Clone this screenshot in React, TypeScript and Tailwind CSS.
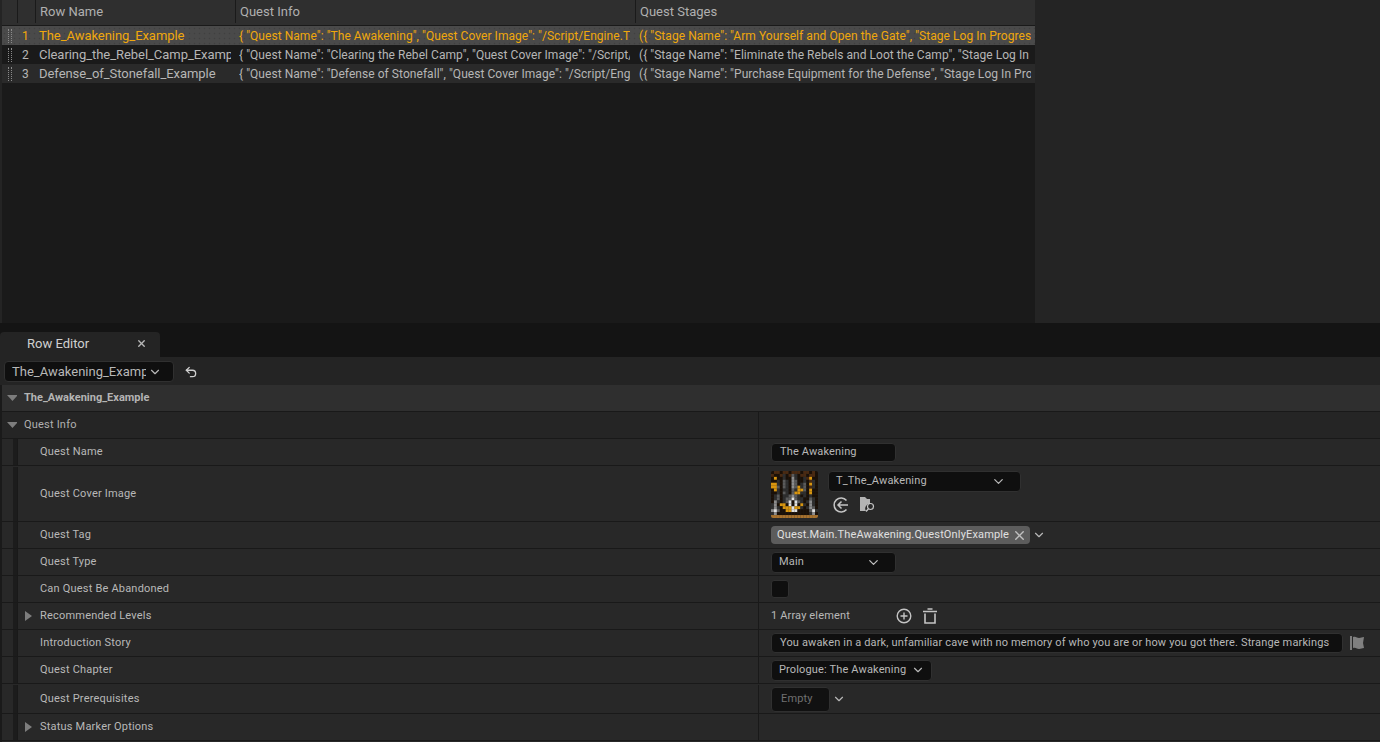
import type { ReactNode } from 'react';
import { ChevronDown, Undo2, X } from 'lucide-react';

const tableRows = [
  {
    num: '1',
    name: 'The_Awakening_Example',
    info: '{ "Quest Name": "The Awakening", "Quest Cover Image": "/Script/Engine.Texture2D\'/Game/Quests/T_The_Awakening"',
    stages: '({ "Stage Name": "Arm Yourself and Open the Gate", "Stage Log In Progress": "Find a weapon"',
    bg: 'bg-[#4a4a4a] bg-[radial-gradient(#404040_22%,transparent_30%)] bg-[length:5px_5px]',
    text: 'text-[#f0a80c]',
  },
  {
    num: '2',
    name: 'Clearing_the_Rebel_Camp_Example',
    info: '{ "Quest Name": "Clearing the Rebel Camp", "Quest Cover Image": "/Script/Engine.Texture2D"',
    stages: '({ "Stage Name": "Eliminate the Rebels and Loot the Camp", "Stage Log In Progress": "Find"',
    bg: 'bg-[#1a1a1a]',
    text: 'text-[#b6b6b6]',
  },
  {
    num: '3',
    name: 'Defense_of_Stonefall_Example',
    info: '{ "Quest Name": "Defense of Stonefall", "Quest Cover Image": "/Script/Engine.Texture2D"',
    stages: '({ "Stage Name": "Purchase Equipment for the Defense", "Stage Log In Progress": "Find"',
    bg: 'bg-[#2a2a2a]',
    text: 'text-[#b6b6b6]',
  },
];

const palette: Record<string, string> = {
  k: '#1a1008',
  b: '#4a2a12',
  d: '#2e2e2e',
  g: '#5a5a5a',
  G: '#8c8c8c',
  y: '#d9960f',
  w: '#e0e0e0',
  t: '#a8722e',
};

// quest cover texture, painted coarse
const coverPixels = [
  'kbbkbbkbbbkbbkbk',
  'bkkbdkbgdkbbkbbk',
  'kykkdkkGdkkdbykk',
  'kkdkgdkGgkkdkbdk',
  'yydkgdkGgkdgkydk',
  'yygkgdkGgydgkbdk',
  'kydkddkgdyygkykk',
  'kkdkgdkgyyddkykk',
  'kdgkddgGgdkdkdkk',
  'kdgkdggwgddkkgdk',
  'kGdkdgwkwgdkdGdk',
  'dGkyykwkwkydkGdk',
  'dGdkyyywyydkdGgk',
  'Gwgkkyywwkkkkgwd',
  'dGkkkkkkkkkkkdGk',
  'tttttttttttttttt',
];

const Thumb = () => (
  <svg width="47" height="47" viewBox="0 0 16 16" className="shrink-0 rounded-[2px]">
    {coverPixels.map((line, y) =>
      line.split('').map((c, x) => <rect key={`${x}-${y}`} x={x} y={y} width="1.02" height="1.02" fill={palette[c]} />)
    )}
  </svg>
);

const Grip = () => (
  <div className="flex w-[18px] justify-start gap-[2px] pl-[6px] shrink-0 h-full items-center">
    <div className="h-[14px] w-[1px] border-l border-dotted border-[#8a8a8a]" />
    <div className="h-[14px] w-[1px] border-l border-dotted border-[#8a8a8a]" />
  </div>
);

const Triangle = ({ open }: { open?: boolean }) => (
  <svg width="10" height="10" viewBox="0 0 10 10" className="shrink-0">
    {open ? <path d="M0 2h11L5.5 8z" fill="#7d7d7d" /> : <path d="M1 0v10l7-5z" fill="#7d7d7d" />}
  </svg>
);

const Row = ({
  label,
  height,
  expander,
  children,
}: {
  label: string;
  height: string;
  expander?: boolean;
  children?: ReactNode;
}) => (
  <div className={`flex border-b border-[#191919] ${height}`}>
    <div className="w-[11px] shrink-0" />
    <div className="w-[4px] shrink-0 bg-[#1c1c1c]" />
    <div className="flex w-[741px] shrink-0 items-center border-l border-[#191919] text-[11px] text-[#b8b8b8]">
      <div className="w-[22px] shrink-0 pl-[6px]">{expander && <Triangle />}</div>
      <span className="tracking-[0.2px]">{label}</span>
    </div>
    <div className="flex flex-1 items-center border-l border-[#191919] pl-[12px] text-[11px] text-[#b8b8b8]">
      {children}
    </div>
  </div>
);

const Combo = ({ text, width }: { text: string; width: string }) => (
  <div className={`flex h-[21px] items-center justify-between rounded-[4px] border border-[#303030] bg-[#0f0f0f] pl-[7px] pr-[14px] tracking-[0.15px] ${width}`}>
    <span>{text}</span>
    <ChevronDown size={15} strokeWidth={2} className="text-[#c0c0c0]" />
  </div>
);

export default function App() {
  return (
    <div className="flex h-[742px] w-[1380px] flex-col overflow-hidden bg-[#1a1a1a] font-['Roboto',sans-serif] text-[#c0c0c0]">
      {/* Data table */}
      <div className="flex h-[323px] shrink-0 bg-[#242424]">
        <div className="ml-[2px] flex w-[1033px] shrink-0 flex-col bg-[#1a1a1a]">
          <div className="flex h-[25px] shrink-0 bg-[#2f2f2f] pb-[2px] text-[13px] text-[#b0b0b0]">
            <div className="w-[16px] shrink-0 border-r border-[#1a1a1a]" />
            <div className="w-[18px] shrink-0 border-r border-[#1a1a1a]" />
            <div className="flex w-[200px] shrink-0 items-center border-r border-[#1a1a1a] pl-[4px]">Row Name</div>
            <div className="flex w-[400px] shrink-0 items-center border-r border-[#1a1a1a] pl-[4px]">Quest Info</div>
            <div className="flex flex-1 items-center pl-[4px]">Quest Stages</div>
          </div>
          <div className="mt-[1px] flex flex-col">
            {tableRows.map((r) => (
              <div key={r.num} className={`flex h-[19px] items-center text-[13px] ${r.bg} ${r.text}`}>
                <Grip />
                <div className="w-[14px] shrink-0 pl-[2px] text-[12px]">{r.num}</div>
                <div className="w-[198px] shrink-0 pl-[5px]">
                  <div className="w-[192px] overflow-hidden whitespace-nowrap tracking-[-0.05px]">{r.name}</div>
                </div>
                <div className="w-[400px] shrink-0 pl-[7px] text-[12px] tracking-[0.05px]">
                  <div className="w-[391px] overflow-hidden whitespace-nowrap">{r.info}</div>
                </div>
                <div className="min-w-0 flex-1 pl-[7px] text-[12px] tracking-[0.05px]">
                  <div className="w-[392px] overflow-hidden whitespace-nowrap">{r.stages}</div>
                </div>
              </div>
            ))}
          </div>
        </div>
      </div>

      {/* Splitter and tab strip */}
      <div className="flex h-[34px] shrink-0 items-end bg-[#141414] pt-[9px]">
        <div className="flex h-[25px] w-[160px] items-center justify-between rounded-t-[4px] bg-[#242424] pb-[2px] pl-[27px] pr-[13px] text-[13px] text-[#d0d0d0]">
          <span>Row Editor</span>
          <X size={11} strokeWidth={3} className="text-[#b8b8b8]" />
        </div>
      </div>

      {/* Toolbar */}
      <div className="flex h-[28px] shrink-0 items-center gap-[10px] bg-[#242424] pl-[4px] pt-[1px]">
        <div className="flex h-[21px] w-[170px] items-center rounded-[4px] border border-[#303030] bg-[#0f0f0f] pl-[7px] pr-[11px] text-[13px] text-[#b8b8b8]">
          <span className="w-[134px] overflow-hidden whitespace-nowrap">The_Awakening_Example</span>
          <ChevronDown size={14} strokeWidth={2} className="ml-auto" />
        </div>
        <Undo2 size={14} strokeWidth={2.2} className="text-[#d0d0d0]" />
      </div>

      {/* Details */}
      <div className="ml-[2px] flex flex-1 flex-col overflow-hidden bg-[#282828]">
        <div className="flex h-[27px] shrink-0 items-center gap-[7px] border-b border-[#191919] bg-[#2f2f2f] pl-[5px] text-[11px] font-bold text-[#b4b4b4]">
          <Triangle open />
          <span>The_Awakening_Example</span>
        </div>
        <div className="flex h-[27px] shrink-0 items-center border-b border-[#191919] bg-[#252525] pl-[5px] text-[11px] text-[#b0b0b0]">
          <div className="flex w-[751px] items-center gap-[7px]">
            <Triangle open />
            <span className="tracking-[0.2px]">Quest Info</span>
          </div>
          <div className="h-full border-l border-[#191919]" />
        </div>
        <Row label="Quest Name" height="h-[27px]">
          <div className="flex h-[19px] w-[125px] items-center rounded-[4px] border border-[#303030] bg-[#0f0f0f] pl-[8px] tracking-[0.15px]">
            The Awakening
          </div>
        </Row>
        <Row label="Quest Cover Image" height="h-[56px] pt-[1px]">
          <Thumb />
          <div className="mb-[5px] ml-[10px] flex flex-col gap-[5px]">
            <div className="flex h-[21px] w-[193px] items-center justify-between rounded-[4px] border border-[#303030] bg-[#0f0f0f] pl-[7px] pr-[14px] tracking-[0.15px]">
              <span>T_The_Awakening</span>
              <ChevronDown size={15} strokeWidth={2} />
            </div>
            <div className="flex items-center gap-[10px] pl-[5px]">
              <svg width="16" height="16" viewBox="0 0 16 16" fill="none" stroke="#c4c4c4" strokeWidth="1.5">
                <path d="M13.5 3.5A7 7 0 1 0 13.5 12.5" />
                <path d="M15 8H5M8.5 4.5 5 8l3.5 3.5" />
              </svg>
              <svg width="17" height="16" viewBox="0 0 17 16">
                <path d="M1 0h5l2 2h3v5a4.5 4.5 0 0 0-4 7H1z" fill="#b4b4b4" />
                <circle cx="11.5" cy="9.5" r="3" fill="none" stroke="#c4c4c4" strokeWidth="1.2" />
                <path d="M9.5 11.8 7 14.5" stroke="#c4c4c4" strokeWidth="1.4" />
              </svg>
            </div>
          </div>
        </Row>
        <Row label="Quest Tag" height="h-[27px]">
          <div className="flex h-[18px] w-[259px] items-center justify-between rounded-[4px] bg-[#5c5c5c] bg-[radial-gradient(#505050_30%,transparent_40%)] bg-[length:2px_2px] pl-[6px] pr-[3px] tracking-[0.15px] text-[#e0e0e0]">
            <span>Quest.Main.TheAwakening.QuestOnlyExample</span>
            <X size={15} strokeWidth={2.2} className="text-[#c0c0c0]" />
          </div>
          <ChevronDown size={14} strokeWidth={2} className="ml-[2px]" />
        </Row>
        <Row label="Quest Type" height="h-[27px]">
          <Combo text="Main" width="w-[125px]" />
        </Row>
        <Row label="Can Quest Be Abandoned" height="h-[27px]">
          <div className="h-[18px] w-[18px] rounded-[3px] border border-[#303030] bg-[#0f0f0f]" />
        </Row>
        <Row label="Recommended Levels" height="h-[27px]" expander>
          <span className="w-[125px] shrink-0 tracking-[0.15px]">1 Array element</span>
          <svg width="16" height="16" viewBox="0 0 16 16" fill="none" stroke="#c4c4c4" strokeWidth="1.4">
            <circle cx="8" cy="8" r="6.8" />
            <path d="M8 4.5v7M4.5 8h7" />
          </svg>
          <svg width="16" height="16" viewBox="0 0 16 16" fill="none" stroke="#c4c4c4" strokeWidth="1.6" className="ml-[10px]">
            <path d="M1 3.5h14M5.5 1h5M3 5.5V15h10V5.5" />
          </svg>
        </Row>
        <Row label="Introduction Story" height="h-[27px]">
          <div className="flex h-[20px] w-[572px] items-center overflow-hidden whitespace-nowrap rounded-[4px] border border-[#303030] bg-[#0f0f0f] pl-[8px] tracking-[0.15px]">
            You awaken in a dark, unfamiliar cave with no memory of who you are or how you got there. Strange markings
          </div>
          <svg width="16" height="16" viewBox="0 0 16 16" className="ml-[7px]">
            <path d="M1 1v14" stroke="#d0d0d0" strokeWidth="1" />
            <path d="M3 2c3-1 4 1 6 1s3-1 5-1l-1 6 1 5c-2 0-3 1-5 1s-3-2-6-1z" fill="#808080" />
          </svg>
        </Row>
        <Row label="Quest Chapter" height="h-[27px]">
          <div className="flex h-[21px] w-[161px] items-center justify-between rounded-[4px] border border-[#303030] bg-[#0f0f0f] pl-[7px] pr-[6px] tracking-[0.15px]">
            <span>Prologue: The Awakening</span>
            <ChevronDown size={14} strokeWidth={2} />
          </div>
        </Row>
        <Row label="Quest Prerequisites" height="h-[30px] pt-[1px]">
          <div className="flex h-[25px] w-[59px] items-center rounded-[4px] border border-[#303030] bg-[#111111] pl-[9px] tracking-[0.15px] text-[#707070]">
            Empty
          </div>
          <ChevronDown size={14} strokeWidth={2} className="ml-[2px]" />
        </Row>
        <Row label="Status Marker Options" height="h-[27px]" expander />
      </div>
    </div>
  );
}
